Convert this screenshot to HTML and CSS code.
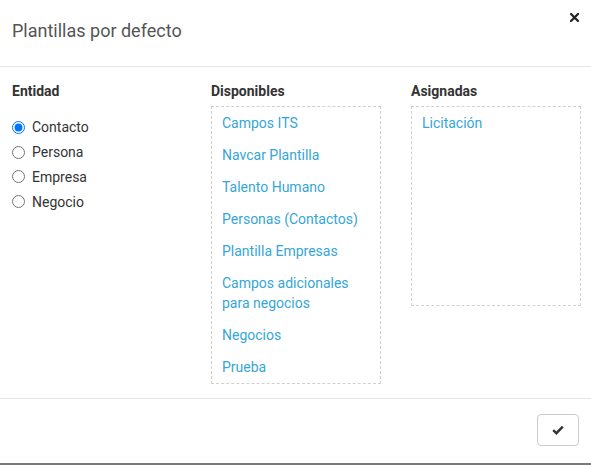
FILE: index.html
```html
<!DOCTYPE html>
<html lang="es">
<head>
<meta charset="utf-8">
<link rel="stylesheet" href="styles.css">
</head>
<body>
<div class="modal">
  <div class="modal-header">
    <h4 class="modal-title">Plantillas por defecto</h4>
    <button class="close" type="button" aria-label="Cerrar">
      <svg width="9" height="9" viewBox="0 0 9 9"><path d="M1 1 L8 8 M8 1 L1 8" stroke="#222" stroke-width="2.2" stroke-linecap="square"/></svg>
    </button>
  </div>
  <div class="modal-body">
    <div class="col">
      <div class="col-title">Entidad</div>
      <div class="radios">
        <label class="radio"><input type="radio" name="ent" checked><span>Contacto</span></label>
        <label class="radio"><input type="radio" name="ent"><span>Persona</span></label>
        <label class="radio"><input type="radio" name="ent"><span>Empresa</span></label>
        <label class="radio"><input type="radio" name="ent"><span>Negocio</span></label>
      </div>
    </div>
    <div class="col">
      <div class="col-title">Disponibles</div>
      <ul class="list">
        <li>Campos ITS</li>
        <li>Navcar Plantilla</li>
        <li>Talento Humano</li>
        <li>Personas (Contactos)</li>
        <li>Plantilla Empresas</li>
        <li>Campos adicionales para negocios</li>
        <li>Negocios</li>
        <li>Prueba</li>
      </ul>
    </div>
    <div class="col">
      <div class="col-title">Asignadas</div>
      <ul class="list list-assigned">
        <li>Licitación</li>
      </ul>
    </div>
  </div>
  <div class="modal-footer">
    <button class="btn" type="button" aria-label="Aceptar">
      <svg width="12" height="10" viewBox="0 0 12 10"><path d="M1.2 5.2 L4.4 8.2 L10.8 1.6" fill="none" stroke="#333" stroke-width="2.4" stroke-linejoin="miter"/></svg>
    </button>
  </div>
</div>
</body>
</html>
```
FILE: styles.css
```css
* { box-sizing: border-box; }
html, body { margin: 0; padding: 0; background: #fff; }
body {
  font-family: Roboto, "Liberation Sans", Arial, sans-serif;
  font-size: 14px;
  color: #333;
}
.modal {
  width: 591px;
  height: 465px;
  position: relative;
  border-bottom: 2px solid #7a7a7a;
}
.modal-header {
  position: relative;
  padding: 20px 12px 24px;
  border-bottom: 1px solid #e5e5e5;
}
.modal-title {
  margin: 0;
  font-size: 18px;
  font-weight: 400;
  line-height: 22px;
  color: #555;
}
.close {
  position: absolute;
  top: 12px;
  right: 12px;
  width: 10px;
  height: 10px;
  padding: 0;
  border: 0;
  background: none;
  display: flex;
  align-items: center;
  justify-content: center;
}
.modal-body {
  display: grid;
  grid-template-columns: 199px 200px 170px;
  padding: 14px 12px 15px;
  height: 332px;
  border-bottom: 1px solid #e5e5e5;
}
.col-title {
  font-weight: 700;
  line-height: 20px;
  margin-bottom: 5px;
  color: #333;
}
.radios {
  padding-top: 9px;
}
.radio {
  display: flex;
  align-items: center;
  height: 24.8px;
  color: #333;
}
.radio input {
  margin: 0 7px 0 0;
  width: 13px;
  height: 13px;
}
.list {
  width: 170px;
  list-style: none;
  margin: 0;
  padding: 0;
  border: 1px dashed #d0d0d0;
}
.list li {
  padding: 6px 10px;
  line-height: 20px;
  color: #36a6d6;
}
.list-assigned {
  height: 200px;
}
.modal-footer {
  display: flex;
  justify-content: flex-end;
  padding: 15px 12px 0;
}
.btn {
  width: 42px;
  height: 32px;
  border: 1px solid #cccccc;
  border-radius: 4px;
  background: #fff;
  padding: 0;
  display: flex;
  align-items: center;
  justify-content: center;
}
```
